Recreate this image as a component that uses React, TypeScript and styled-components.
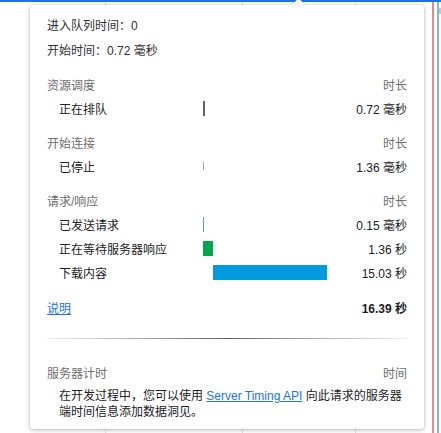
import React from "react";
import styled, { createGlobalStyle } from "styled-components";

const Global = createGlobalStyle`
  html, body { margin: 0; padding: 0; background: #fff; }
  body {
    font-family: "Liberation Sans", "Noto Sans CJK SC", sans-serif;
    font-size: 12px;
    color: #202124;
  }
`;

const Page = styled.div`
  width: 441px;
  height: 433px;
  box-sizing: border-box;
  padding: 5px 0 0 30px;
  overflow: hidden;
  background:
    linear-gradient(#1a73e8, #1a73e8) 0 0 / 100% 2px no-repeat,
    linear-gradient(#df8b8b, #df8b8b) 432px 0 / 2px 100% no-repeat,
    linear-gradient(#86b2e6, #86b2e6) 437px 0 / 2px 100% no-repeat,
    linear-gradient(#c8c8c8, #c8c8c8) 439px 8px / 2px 6px no-repeat,
    linear-gradient(#dadce0, #dadce0) 105px 0 / 1px 100% no-repeat,
    linear-gradient(#dadce0, #dadce0) 242px 0 / 1px 100% no-repeat,
    linear-gradient(#dadce0, #dadce0) 355px 0 / 1px 100% no-repeat,
    #fff;
`;

const Card = styled.div`
  position: relative;
  width: 394px;
  height: 424px;
  box-sizing: border-box;
  padding: 9px 17px 9px 17px;
  background: #fff;
  border-radius: 3px;
  box-shadow: 0 1px 4px rgba(0, 0, 0, 0.28), 0 0 1px rgba(0, 0, 0, 0.2);
`;

const ArrowWrap = styled.div`
  position: absolute;
  top: -6px;
  left: 260px;
  width: 16px;
  height: 6px;
  overflow: hidden;
`;

const ArrowTip = styled.div`
  width: 9px;
  height: 9px;
  margin: 1px auto 0;
  background: #fff;
  transform: rotate(45deg);
  box-shadow: 0 0 2px rgba(0, 0, 0, 0.35);
`;

const InfoRow = styled.div`
  height: 25px;
  line-height: 25px;
  color: #303030;
`;

const Section = styled.div<{ $gap: number }>`
  margin-top: ${(p) => p.$gap}px;
  display: grid;
  grid-template-columns: 156px 124px 1fr;
  grid-auto-rows: 24px;
  align-items: center;
`;

const HeadName = styled.div`
  grid-column: 1 / 3;
  color: #6e6e6e;
`;

const HeadRight = styled.div`
  text-align: right;
  color: #6e6e6e;
`;

const ItemName = styled.div`
  padding-left: 12px;
  color: #202124;
  white-space: nowrap;
`;

const BarCell = styled.div`
  display: flex;
  align-items: center;
  height: 100%;
`;

const Bar = styled.div<{ $color: string; $h: number }>`
  height: ${(p) => p.$h}px;
  background: ${(p) => p.$color};
  flex: none;
`;

const Duration = styled.div`
  text-align: right;
  white-space: nowrap;
  color: #202124;
`;

const TotalRow = styled.div`
  margin-top: 11px;
  height: 24px;
  display: flex;
  align-items: center;
  justify-content: space-between;
`;

const Link = styled.a`
  color: #1a73e8;
  text-decoration: underline;
  cursor: pointer;
`;

const Total = styled.div`
  font-weight: bold;
  color: #202124;
`;

const Divider = styled.div`
  margin-top: 19px;
  height: 1px;
  background: linear-gradient(90deg, #f1f1f1, #5f6368 50%, #f1f1f1);
`;

const ServerHead = styled.div`
  margin-top: 21px;
  height: 24px;
  display: flex;
  align-items: center;
  justify-content: space-between;
  color: #6e6e6e;
`;

const Para = styled.p`
  margin: 4px 0 0;
  padding-left: 12px;
  line-height: 16px;
  color: #202124;
`;

type Item = { name: string; start: number; dur: number; color: string; h: number; min: number; label: string };
type Group = { title: string; gap: number; items: Item[] };

const SCALE = 124 / 16390;

const groups: Group[] = [
  {
    title: "资源调度",
    gap: 8,
    items: [{ name: "正在排队", start: 0, dur: 0.72, color: "#5f6368", h: 15, min: 2, label: "0.72 毫秒" }],
  },
  {
    title: "开始连接",
    gap: 10,
    items: [{ name: "已停止", start: 0.72, dur: 1.36, color: "#a7a7a7", h: 8, min: 1, label: "1.36 毫秒" }],
  },
  {
    title: "请求/响应",
    gap: 10,
    items: [
      { name: "已发送请求", start: 2.08, dur: 0.15, color: "#6c979d", h: 15, min: 1, label: "0.15 毫秒" },
      { name: "正在等待服务器响应", start: 2.23, dur: 1360, color: "#00a84b", h: 15, min: 1, label: "1.36 秒" },
      { name: "下载内容", start: 1362.23, dur: 15030, color: "#009ade", h: 15, min: 1, label: "15.03 秒" },
    ],
  },
];

export default function App() {
  return (
    <>
      <Global />
      <Page>
        <Card>
          <ArrowWrap>
            <ArrowTip />
          </ArrowWrap>
          <InfoRow>进入队列时间：0</InfoRow>
          <InfoRow>开始时间：0.72 毫秒</InfoRow>
          {groups.map((g) => (
            <Section key={g.title} $gap={g.gap}>
              <HeadName>{g.title}</HeadName>
              <HeadRight>时长</HeadRight>
              {g.items.map((it) => (
                <React.Fragment key={it.name}>
                  <ItemName>{it.name}</ItemName>
                  <BarCell>
                    <Bar
                      $color={it.color}
                      $h={it.h}
                      style={{
                        marginLeft: Math.round(it.start * SCALE),
                        width: Math.max(it.min, Math.round(it.dur * SCALE)),
                      }}
                    />
                  </BarCell>
                  <Duration>{it.label}</Duration>
                </React.Fragment>
              ))}
            </Section>
          ))}
          <TotalRow>
            <Link>说明</Link>
            <Total>16.39 秒</Total>
          </TotalRow>
          <Divider />
          <ServerHead>
            <span>服务器计时</span>
            <span>时间</span>
          </ServerHead>
          <Para>
            在开发过程中，您可以使用 <Link>Server Timing API</Link> 向此请求的服务器端时间信息添加数据洞见。
          </Para>
        </Card>
      </Page>
    </>
  );
}
